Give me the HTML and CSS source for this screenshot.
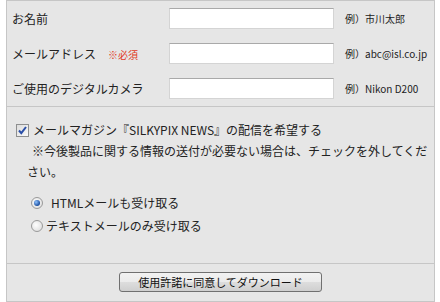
FILE: index.html
```html
<!DOCTYPE html>
<html lang="ja">
<head>
<meta charset="utf-8">
<link rel="stylesheet" href="styles.css">
</head>
<body>
<div class="panel">
  <div class="fields">
    <div class="row">
      <span class="label">お名前</span>
      <span class="input"></span>
      <span class="example">例）市川太郎</span>
    </div>
    <div class="row">
      <span class="label">メールアドレス<span class="req">※必須</span></span>
      <span class="input"></span>
      <span class="example">例）abc@isl.co.jp</span>
    </div>
    <div class="row">
      <span class="label">ご使用のデジタルカメラ</span>
      <span class="input"></span>
      <span class="example">例）Nikon D200</span>
    </div>
  </div>
  <div class="options">
    <div class="check-row">
      <span class="checkbox">
        <svg width="13" height="13" viewBox="0 0 13 13"><path d="M3 6.5 L5.3 9.2 L10 3" fill="none" stroke="#2a4fa8" stroke-width="2"/></svg>
      </span>
      <span>メールマガジン『SILKYPIX NEWS』の配信を希望する</span>
    </div>
    <p class="note">※今後製品に関する情報の送付が必要ない場合は、チェックを外してください。</p>
    <div class="radios">
      <div class="radio-row"><span class="radio on"></span><span class="radio-text spaced">HTMLメールも受け取る</span></div>
      <div class="radio-row"><span class="radio"></span><span class="radio-text">テキストメールのみ受け取る</span></div>
    </div>
  </div>
  <div class="actions">
    <span class="button">使用許諾に同意してダウンロード</span>
  </div>
</div>
</body>
</html>
```
FILE: styles.css
```css
* { box-sizing: border-box; }
html, body { margin: 0; padding: 0; background: #ffffff; }
body {
  font-family: "Noto Sans CJK JP", "Noto Sans", sans-serif;
  color: #222;
  font-size: 12px;
}
.panel {
  margin-left: 6px;
  width: 429px;
  height: 302px;
  background: #e6e6e6;
  border: 1px solid #c6c6c6;
  display: flex;
  flex-direction: column;
}
.fields {
  padding: 7px 0 7px 5px;
  border-bottom: 1px solid #c6c6c6;
  display: flex;
  flex-direction: column;
  gap: 14px;
}
.row {
  display: flex;
  align-items: center;
  height: 21px;
}
.label {
  width: 157px;
  font-size: 12px;
  line-height: 21px;
  white-space: nowrap;
}
.req {
  color: #e03a1e;
  font-size: 10px;
  margin-left: 12px;
}
.input {
  width: 165px;
  height: 21px;
  background: #fff;
  border: 1px solid #d4d4d4;
  border-top-color: #a9a9a9;
}
.example {
  margin-left: 11px;
  font-size: 10px;
  white-space: nowrap;
}
.options {
  flex: 1;
  padding: 13px 0 0 9px;
  border-bottom: 1px solid #c6c6c6;
}
.check-row {
  display: flex;
  align-items: center;
  height: 20px;
  line-height: 20px;
  gap: 4px;
}
.checkbox {
  width: 13px;
  height: 13px;
  border: 1px solid #8e8f8f;
  background: linear-gradient(135deg, #dcdcdc, #fafafa);
  display: inline-flex;
}
.checkbox svg { margin: -1px; }
.note {
  margin: 0;
  padding-left: 11px;
  text-indent: 5px;
  line-height: 21px;
  padding-right: 2px;
}
.radios {
  margin-top: 9px;
  padding-left: 15px;
}
.radio-row {
  display: flex;
  align-items: center;
  height: 23px;
  gap: 3px;
}
.radio {
  width: 12px;
  height: 12px;
  border-radius: 50%;
  border: 1px solid #9a9a9a;
  background: radial-gradient(circle at 40% 40%, #fefefe, #d8d8d8);
  display: inline-block;
  position: relative;
}
.radio.on::after {
  content: "";
  position: absolute;
  left: 2px;
  top: 2px;
  width: 6px;
  height: 6px;
  border-radius: 50%;
  background: radial-gradient(circle at 35% 35%, #8fc3ff, #1a4d9e 70%);
}
.radio-text.spaced { margin-left: 5px; }
.actions {
  height: 37px;
  display: flex;
  justify-content: center;
  padding-top: 8px;
}
.button {
  width: 203px;
  height: 20px;
  border: 1px solid #707070;
  border-radius: 3px;
  background: linear-gradient(#f2f2f2 0%, #ebebeb 50%, #dddddd 51%, #cfcfcf 100%);
  font-size: 11px;
  line-height: 18px;
  text-align: center;
  color: #111;
}
```
